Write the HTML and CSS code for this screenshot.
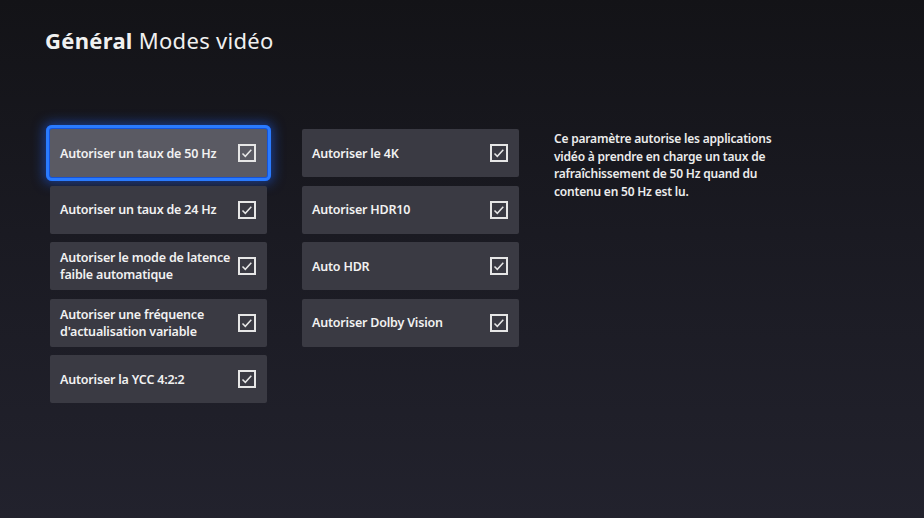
FILE: index.html
```html
<!DOCTYPE html>
<html lang="fr">
<head>
    <meta charset="UTF-8">
    <title>Modes vidéo</title>
    <link rel="stylesheet" href="styles.css">
</head>
<body>
    <div class="page">
        <h1 class="title"><b>Général</b> Modes vidéo</h1>

        <div class="content">
            <div class="column">
                <div class="tile focused">
                    <span class="label">Autoriser un taux de 50 Hz</span>
                    <span class="check"><svg viewBox="0 0 14 14"><path d="M2.5 7.5l2.8 2.8 6-6.6"/></svg></span>
                </div>
                <div class="tile">
                    <span class="label">Autoriser un taux de 24 Hz</span>
                    <span class="check"><svg viewBox="0 0 14 14"><path d="M2.5 7.5l2.8 2.8 6-6.6"/></svg></span>
                </div>
                <div class="tile">
                    <span class="label">Autoriser le mode de latence faible automatique</span>
                    <span class="check"><svg viewBox="0 0 14 14"><path d="M2.5 7.5l2.8 2.8 6-6.6"/></svg></span>
                </div>
                <div class="tile">
                    <span class="label">Autoriser une fréquence d'actualisation variable</span>
                    <span class="check"><svg viewBox="0 0 14 14"><path d="M2.5 7.5l2.8 2.8 6-6.6"/></svg></span>
                </div>
                <div class="tile">
                    <span class="label">Autoriser la YCC 4:2:2</span>
                    <span class="check"><svg viewBox="0 0 14 14"><path d="M2.5 7.5l2.8 2.8 6-6.6"/></svg></span>
                </div>
            </div>

            <div class="column">
                <div class="tile">
                    <span class="label">Autoriser le 4K</span>
                    <span class="check"><svg viewBox="0 0 14 14"><path d="M2.5 7.5l2.8 2.8 6-6.6"/></svg></span>
                </div>
                <div class="tile">
                    <span class="label">Autoriser HDR10</span>
                    <span class="check"><svg viewBox="0 0 14 14"><path d="M2.5 7.5l2.8 2.8 6-6.6"/></svg></span>
                </div>
                <div class="tile">
                    <span class="label">Auto HDR</span>
                    <span class="check"><svg viewBox="0 0 14 14"><path d="M2.5 7.5l2.8 2.8 6-6.6"/></svg></span>
                </div>
                <div class="tile">
                    <span class="label">Autoriser Dolby Vision</span>
                    <span class="check"><svg viewBox="0 0 14 14"><path d="M2.5 7.5l2.8 2.8 6-6.6"/></svg></span>
                </div>
            </div>

            <p class="help">Ce paramètre autorise les applications vidéo à prendre en charge un taux de rafraîchissement de 50 Hz quand du contenu en 50 Hz est lu.</p>
        </div>
    </div>
</body>
</html>
```

FILE: styles.css
```css
body{
    margin: 0;
    padding: 0;
    height: 518px;
    overflow: hidden;
    background: linear-gradient(to bottom, #131317 0%, #1a1a22 45%, #22222d 100%);
    color: #f2f2f2;
    font-family: "Noto Sans", "Open Sans", sans-serif;
}
.page{
    padding: 25px 0 0 45px;
}
.title{
    margin: 0;
    font-size: 22px;
    font-weight: 400;
    letter-spacing: 0.3px;
    color: #f0f0f0;
}
.title b{
    font-weight: 700;
}
.content{
    display: flex;
    align-items: flex-start;
    margin-top: 74px;
    padding-left: 5px;
}
.column{
    display: flex;
    flex-direction: column;
    gap: 8.5px;
    width: 217px;
    margin-right: 35px;
}
.tile{
    display: flex;
    align-items: center;
    justify-content: space-between;
    height: 48px;
    padding: 0 11px 0 10px;
    box-sizing: border-box;
    background-color: #3a3a43;
    border-radius: 2px;
}
.tile.focused{
    background-color: #5a5a63;
    outline: 3px solid #2a7bff;
    outline-offset: 1px;
    box-shadow: 0 0 0 4px #1553d8, 0 0 12px 6px rgba(30, 100, 255, 0.5);
}
.label{
    font-size: 12.5px;
    line-height: 17px;
    font-weight: 600;
    color: #f1f1f1;
    max-width: 178px;
    letter-spacing: -0.2px;
}
.check{
    flex: none;
    width: 18px;
    height: 18px;
    box-sizing: border-box;
    border: 2px solid #e6e6e6;
}
.check svg{
    display: block;
    width: 14px;
    height: 14px;
    fill: none;
    stroke: #e6e6e6;
    stroke-width: 1.5;
}
.help{
    margin: 1px 0 0 0;
    width: 220px;
    font-size: 12px;
    line-height: 17.5px;
    font-weight: 600;
    letter-spacing: -0.2px;
    color: #ececec;
}
```
